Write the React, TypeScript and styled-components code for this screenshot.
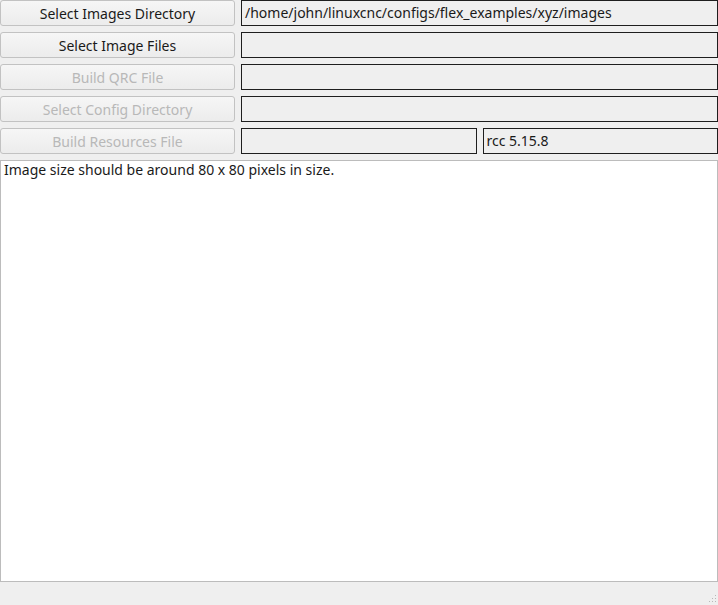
import { Fragment } from "react";
import styled, { createGlobalStyle } from "styled-components";

const Global = createGlobalStyle`
  html, body {
    margin: 0;
    padding: 0;
    background: #efefef;
  }
  body {
    font-family: "Noto Sans", "DejaVu Sans", sans-serif;
    font-size: 14px;
    color: #000;
  }
`;

const Window = styled.div`
  width: 718px;
  height: 605px;
  display: flex;
  flex-direction: column;
  background: #efefef;
  overflow: hidden;
`;

const Controls = styled.div`
  display: grid;
  grid-template-columns: 235px 1fr;
  grid-auto-rows: 26px;
  column-gap: 6px;
  row-gap: 6px;
`;

const Button = styled.button<{ disabled?: boolean }>`
  font: inherit;
  font-size: 14px;
  height: 26px;
  padding: 0;
  margin: 0;
  border: 1px solid #c2c2c2;
  border-radius: 3px;
  background: linear-gradient(#f6f6f6, #ececec);
  color: ${(p) => (p.disabled ? "#b8b8b8" : "#1a1a1a")};
  text-align: center;
`;

const Fields = styled.div<{ split?: boolean }>`
  display: grid;
  grid-template-columns: ${(p) => (p.split ? "1fr 1fr" : "1fr")};
  column-gap: 6px;
`;

const Field = styled.div`
  height: 26px;
  box-sizing: border-box;
  border: 1px solid #1e1e1e;
  background: #efefef;
  padding: 0 3px;
  line-height: 24px;
  white-space: nowrap;
  overflow: hidden;
  color: #1a1a1a;
`;

const Log = styled.div`
  margin-top: 6px;
  height: 422px;
  box-sizing: border-box;
  border: 1px solid #bcbcbc;
  background: #fff;
  padding: 0 3px;
  line-height: 18px;
  color: #1a1a1a;
`;

const StatusBar = styled.div`
  flex: 1;
  position: relative;
`;

const Grip = styled.svg`
  position: absolute;
  right: 1px;
  bottom: 2px;
`;

const rows: { label: string; disabled?: boolean; values: string[] }[] = [
  { label: "Select Images Directory", values: ["/home/john/linuxcnc/configs/flex_examples/xyz/images"] },
  { label: "Select Image Files", values: [""] },
  { label: "Build QRC File", disabled: true, values: [""] },
  { label: "Select Config Directory", disabled: true, values: [""] },
  { label: "Build Resources File", disabled: true, values: ["", "rcc 5.15.8"] },
];

function SizeGrip() {
  const dots = [
    [10, 0],
    [7, 3], [10, 3],
    [4, 6], [7, 6], [10, 6],
  ];
  return (
    <Grip width="12" height="8" viewBox="0 0 12 8">
      {dots.map(([x, y], i) => (
        <rect key={i} x={x} y={y} width="1" height="1" fill="#b8b8b8" />
      ))}
    </Grip>
  );
}

export default function App() {
  return (
    <Window>
      <Global />
      <Controls>
        {rows.map((r) => (
          <Fragment key={r.label}>
            <Button disabled={r.disabled}>{r.label}</Button>
            <Fields split={r.values.length > 1}>
              {r.values.map((v, i) => (
                <Field key={i}>{v}</Field>
              ))}
            </Fields>
          </Fragment>
        ))}
      </Controls>
      <Log>Image size should be around 80 x 80 pixels in size.</Log>
      <StatusBar>
        <SizeGrip />
      </StatusBar>
    </Window>
  );
}
